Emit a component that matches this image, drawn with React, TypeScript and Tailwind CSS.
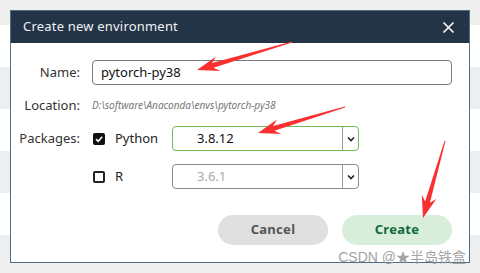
import React from "react";

type Pt = [number, number];

function arrowPoints(tail: Pt, tip: Pt, headLen: number, headW: number, w0: number, w1: number): string {
  const dx = tip[0] - tail[0];
  const dy = tip[1] - tail[1];
  const len = Math.hypot(dx, dy);
  const ux = dx / len;
  const uy = dy / len;
  const nx = -uy;
  const ny = ux;
  const bx = tip[0] - ux * headLen;
  const by = tip[1] - uy * headLen;
  const cx = tip[0] - ux * headLen * 0.75;
  const cy = tip[1] - uy * headLen * 0.75;
  const pts: Pt[] = [
    [tail[0] + nx * w0 / 2, tail[1] + ny * w0 / 2],
    [cx + nx * w1 / 2, cy + ny * w1 / 2],
    [bx + nx * headW / 2, by + ny * headW / 2],
    [tip[0], tip[1]],
    [bx - nx * headW / 2, by - ny * headW / 2],
    [cx - nx * w1 / 2, cy - ny * w1 / 2],
    [tail[0] - nx * w0 / 2, tail[1] - ny * w0 / 2],
  ];
  return pts.map((p) => `${p[0].toFixed(1)},${p[1].toFixed(1)}`).join(" ");
}

function Chevron() {
  return (
    <svg width="10" height="10" viewBox="0 0 10 10">
      <path d="M2 3.5 L5 6.5 L8 3.5" stroke="#222" strokeWidth="1.6" fill="none" />
    </svg>
  );
}

export default function App() {
  const font = { fontFamily: '"Noto Sans", "Open Sans", sans-serif' };
  return (
    <div className="relative w-[480px] h-[273px] overflow-hidden" style={font}>
      <div className="flex flex-col">
        <div className="h-[25px] bg-[#eeeeee]" />
        <div className="h-[42px] bg-white" />
        <div className="h-[42px] bg-[#eeeeee]" />
        <div className="h-[42px] bg-white" />
        <div className="h-[42px] bg-[#eeeeee]" />
        <div className="h-[42px] bg-white" />
        <div className="h-[38px] bg-[#eeeeee]" />
      </div>

      <div className="absolute left-[10px] top-[10px] w-[460px] h-[253px] border border-[#4d7088] bg-white flex flex-col">
        <div className="h-[32px] bg-[#243447] flex items-center justify-between pl-[12px] pr-[14px]">
          <span className="text-[13px] text-[#eef1f4] tracking-[0.2px]">Create new environment</span>
          <svg width="13" height="13" viewBox="0 0 13 13">
            <path d="M1.5 1.5 L11.5 11.5 M11.5 1.5 L1.5 11.5" stroke="#f4f6f8" strokeWidth="1.7" />
          </svg>
        </div>

        <div className="flex flex-col pt-[17px] pr-[17px]">
          <div className="flex items-center h-[25px]">
            <div className="w-[69px] text-right text-[13px] text-[#333]">Name:</div>
            <div className="ml-[12px] flex-1 h-[25px] border border-[#7a7a7a] rounded-[4px] flex items-center pl-[8px] text-[13px] text-[#111]">
              pytorch-py38
            </div>
          </div>

          <div className="flex items-center h-[41px]">
            <div className="w-[69px] text-right text-[13px] text-[#333]">Location:</div>
            <div className="ml-[12px] text-[10px] italic text-[#777]">D:\software\Anaconda\envs\pytorch-py38</div>
          </div>

          <div className="flex items-center h-[25px]">
            <div className="w-[69px] text-right text-[13px] text-[#333]">Packages:</div>
            <div className="ml-[13px] w-[12px] h-[12px] bg-[#111] rounded-[2px] flex items-center justify-center">
              <svg width="10" height="10" viewBox="0 0 10 10">
                <path d="M2 5.2 L4.2 7.3 L8.2 2.8" stroke="#fff" strokeWidth="1.6" fill="none" />
              </svg>
            </div>
            <div className="ml-[10px] w-[57px] text-[13px] text-[#222]">Python</div>
            <div className="w-[187px] h-[25px] border border-[#6cbb55] rounded-[4px] flex">
              <div className="flex-1 flex items-center pl-[24px] text-[13px] text-[#111]">3.8.12</div>
              <div className="w-[16px] border-l border-[#999] flex items-center justify-center">
                <Chevron />
              </div>
            </div>
          </div>

          <div className="flex items-center h-[25px] mt-[13px]">
            <div className="w-[69px]" />
            <div className="ml-[13px] w-[12px] h-[12px] border-2 border-[#222] rounded-[2px]" />
            <div className="ml-[10px] w-[57px] text-[13px] text-[#222]">R</div>
            <div className="w-[187px] h-[25px] border border-[#8a8a8a] rounded-[4px] flex">
              <div className="flex-1 flex items-center pl-[24px] text-[13px] text-[#aaaaaa]">3.6.1</div>
              <div className="w-[16px] border-l border-[#999] flex items-center justify-center">
                <Chevron />
              </div>
            </div>
          </div>

          <div className="flex justify-end gap-[14px] mt-[26px]">
            <div className="w-[110px] h-[30px] rounded-full bg-[#e0e0e0] flex items-center justify-center text-[13px] font-bold text-[#555] tracking-[0.3px]">
              Cancel
            </div>
            <div className="w-[110px] h-[30px] rounded-full bg-[#d8eeda] flex items-center justify-center text-[13px] font-bold text-[#0d6b3a] tracking-[0.3px]">
              Create
            </div>
          </div>
        </div>
      </div>

      <div
        className="absolute right-[14px] top-[250px] text-[14px] text-[#9a9a9a] leading-none opacity-90"
        style={{ fontFamily: '"Liberation Sans", "Noto Sans CJK SC", sans-serif' }}
      >
        CSDN @★半岛铁盒
      </div>

      <svg className="absolute left-0 top-0 pointer-events-none" width="480" height="273" viewBox="0 0 480 273">
        <polygon points={arrowPoints([292, 42], [197, 70], 22, 15, 1, 5)} fill="#fa3030" />
        <polygon points={arrowPoints([345, 107], [258, 133], 22, 15, 1, 5)} fill="#fa3030" />
        <polygon points={arrowPoints([445, 141], [423, 218], 22, 15, 1, 5)} fill="#fa3030" />
      </svg>
    </div>
  );
}
